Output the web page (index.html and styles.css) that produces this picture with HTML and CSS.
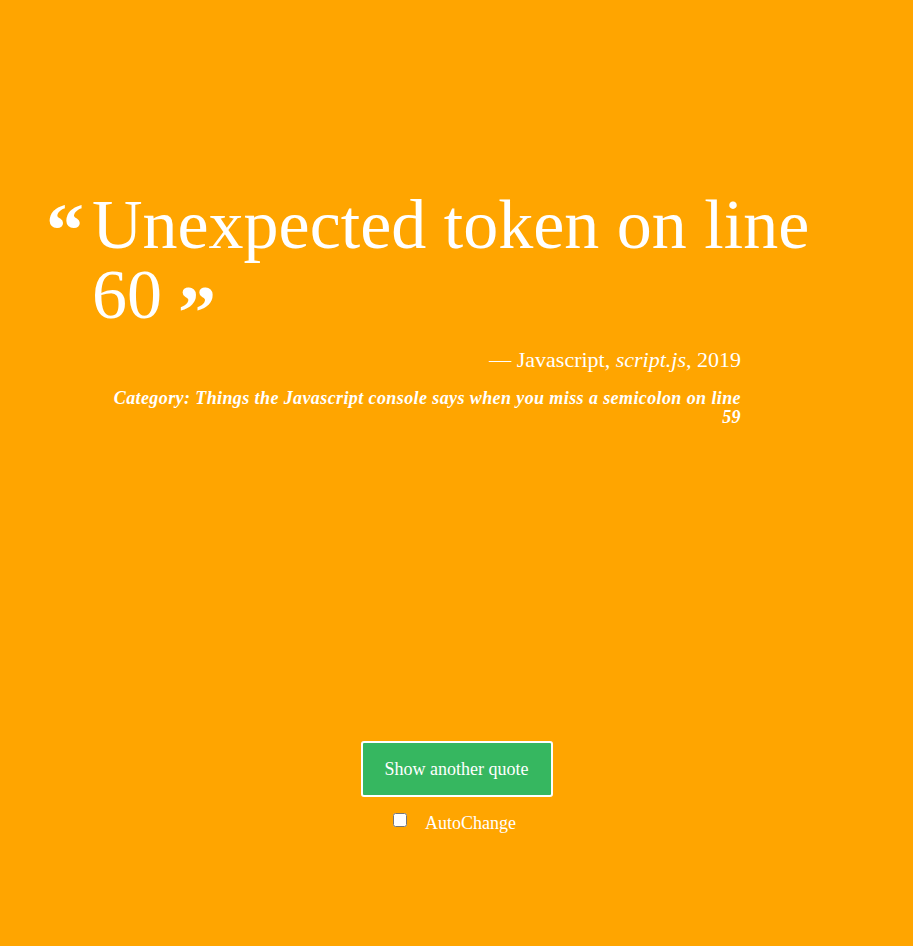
FILE: index.html
```html
<!DOCTYPE html>
<html>
<head>
<meta charset="utf-8">
<link rel="stylesheet" href="styles.css">
</head>
<body>
<main class="page">
  <section class="quote-box">
    <blockquote class="quote">
      <span class="mark open">&ldquo;</span>
      <p class="quote-text">Unexpected token on line 60<span class="mark close">&rdquo;</span></p>
    </blockquote>
    <div class="meta">
      <p class="author">&mdash; Javascript, <em>script.js</em>, 2019</p>
      <p class="category">Category: Things the Javascript console says when you miss a semicolon on line 59</p>
    </div>
  </section>
  <section class="controls">
    <button class="btn">Show another quote</button>
    <label class="auto"><input type="checkbox" class="check"><span>AutoChange</span></label>
  </section>
</main>
</body>
</html>
```
FILE: styles.css
```css
html, body {
  margin: 0;
  padding: 0;
  background: #ffa500;
  color: #fff;
  font-family: "Liberation Serif", "DejaVu Serif", serif;
}
.page {
  height: 946px;
  display: flex;
  flex-direction: column;
}
.quote-box {
  padding: 190px 0 0 46px;
}
.quote {
  margin: 0;
  display: flex;
  align-items: flex-start;
}
.mark {
  font-weight: bold;
  font-size: 76px;
  line-height: 1;
}
.mark.open {
  width: 46px;
  flex: none;
  margin-top: 2px;
}
.quote-text {
  margin: 0;
  font-size: 70px;
  line-height: 70px;
  width: 740px;
}
.mark.close {
  line-height: 0;
  position: relative;
  top: 20px;
  margin-left: 16px;
}
.meta {
  width: 695px;
}
.author {
  margin: 17px 0 0;
  text-align: right;
  font-size: 22px;
}
.category {
  margin: 16px 0 0 62px;
  text-align: right;
  font-size: 18px;
  letter-spacing: 0.4px;
  line-height: 19px;
  font-weight: bold;
  font-style: italic;
}
.controls {
  margin-top: auto;
  padding-bottom: 112px;
  display: flex;
  flex-direction: column;
  align-items: center;
}
.btn {
  width: 192px;
  height: 56px;
  background: #36b760;
  border: 2px solid #fff;
  border-radius: 3px;
  color: #fff;
  font-family: inherit;
  font-size: 18px;
}
.auto {
  margin-top: 16px;
  display: flex;
  align-items: center;
  font-size: 18px;
  margin-left: -4px;
}
.check {
  margin: 0 18px 0 0;
  width: 14px;
  height: 14px;
  position: relative;
  top: -4px;
}
```
